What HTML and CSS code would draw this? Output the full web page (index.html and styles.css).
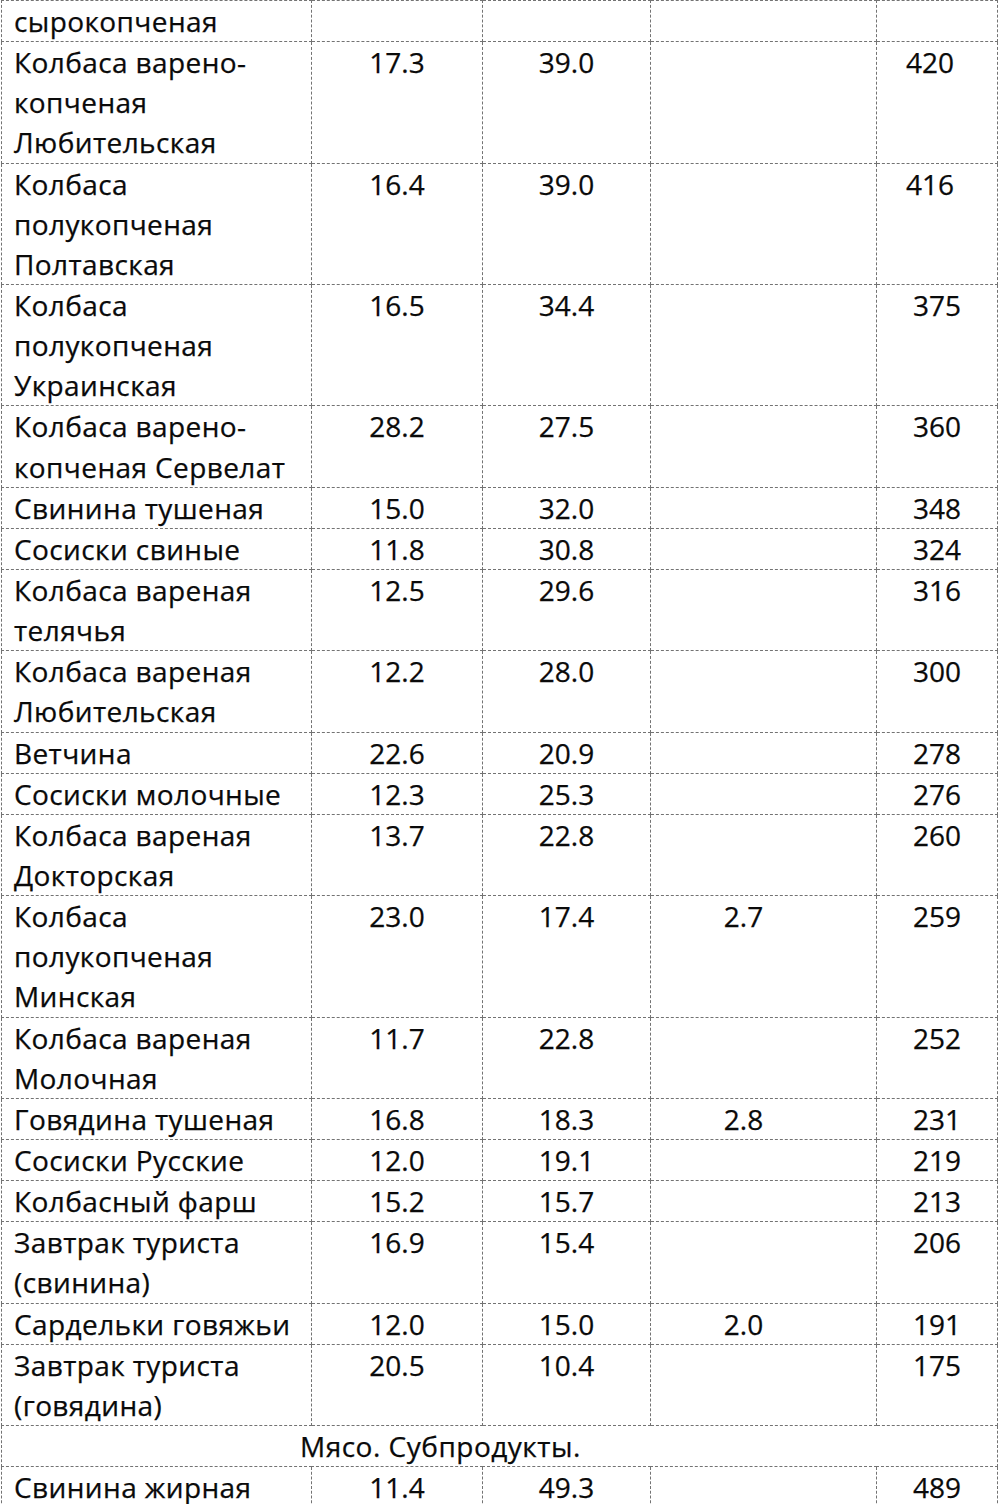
FILE: index.html
```html
<!DOCTYPE html>
<html lang="ru">
<head>
<meta charset="utf-8">
<title>Калорийность мясных продуктов</title>
<link rel="stylesheet" href="styles.css">
</head>
<body>
<table class="food-table">
  <colgroup>
    <col class="c-name"><col class="c-prot"><col class="c-fat"><col class="c-carb"><col class="c-kcal">
  </colgroup>
  <tbody>
    <tr><td class="name">сырокопченая</td><td></td><td></td><td class="carb"></td><td></td></tr>
    <tr><td class="name">Колбаса варено-<br>копченая<br>Любительская</td><td>17.3</td><td>39.0</td><td class="carb"></td><td class="kcal-shift">420</td></tr>
    <tr><td class="name">Колбаса<br>полукопченая<br>Полтавская</td><td>16.4</td><td>39.0</td><td class="carb"></td><td class="kcal-shift">416</td></tr>
    <tr><td class="name">Колбаса<br>полукопченая<br>Украинская</td><td>16.5</td><td>34.4</td><td class="carb"></td><td>375</td></tr>
    <tr><td class="name">Колбаса варено-<br>копченая Сервелат</td><td>28.2</td><td>27.5</td><td class="carb"></td><td>360</td></tr>
    <tr><td class="name">Свинина тушеная</td><td>15.0</td><td>32.0</td><td class="carb"></td><td>348</td></tr>
    <tr><td class="name">Сосиски свиные</td><td>11.8</td><td>30.8</td><td class="carb"></td><td>324</td></tr>
    <tr><td class="name">Колбаса вареная<br>телячья</td><td>12.5</td><td>29.6</td><td class="carb"></td><td>316</td></tr>
    <tr><td class="name">Колбаса вареная<br>Любительская</td><td>12.2</td><td>28.0</td><td class="carb"></td><td>300</td></tr>
    <tr><td class="name">Ветчина</td><td>22.6</td><td>20.9</td><td class="carb"></td><td>278</td></tr>
    <tr><td class="name">Сосиски молочные</td><td>12.3</td><td>25.3</td><td class="carb"></td><td>276</td></tr>
    <tr><td class="name">Колбаса вареная<br>Докторская</td><td>13.7</td><td>22.8</td><td class="carb"></td><td>260</td></tr>
    <tr><td class="name">Колбаса<br>полукопченая<br>Минская</td><td>23.0</td><td>17.4</td><td class="carb">2.7</td><td>259</td></tr>
    <tr><td class="name">Колбаса вареная<br>Молочная</td><td>11.7</td><td>22.8</td><td class="carb"></td><td>252</td></tr>
    <tr><td class="name">Говядина тушеная</td><td>16.8</td><td>18.3</td><td class="carb">2.8</td><td>231</td></tr>
    <tr><td class="name">Сосиски Русские</td><td>12.0</td><td>19.1</td><td class="carb"></td><td>219</td></tr>
    <tr><td class="name">Колбасный фарш</td><td>15.2</td><td>15.7</td><td class="carb"></td><td>213</td></tr>
    <tr><td class="name">Завтрак туриста<br>(свинина)</td><td>16.9</td><td>15.4</td><td class="carb"></td><td>206</td></tr>
    <tr><td class="name">Сардельки говяжьи</td><td>12.0</td><td>15.0</td><td class="carb">2.0</td><td>191</td></tr>
    <tr><td class="name">Завтрак туриста<br>(говядина)</td><td>20.5</td><td>10.4</td><td class="carb"></td><td>175</td></tr>
    <tr><td class="section" colspan="5">Мясо. Субпродукты.</td></tr>
    <tr><td class="name">Свинина жирная</td><td>11.4</td><td>49.3</td><td class="carb"></td><td>489</td></tr>
  </tbody>
</table>
</body>
</html>
```

FILE: styles.css
```css
html, body {
  margin: 0;
  padding: 0;
  background: #ffffff;
}

body {
  padding-left: 1px;
  font-family: "Open Sans", "Noto Sans", sans-serif;
  font-size: 28px;
  color: #0a0a0a;
  -webkit-text-stroke: 0.25px #0a0a0a;
}

.food-table {
  border-collapse: collapse;
  table-layout: fixed;
  width: 996px;
}

.c-name { width: 310px; }
.c-prot { width: 171px; }
.c-fat  { width: 168px; }
.c-carb { width: 226px; }
.c-kcal { width: 121px; }

.food-table td {
  border: 1px dashed #737373;
  padding: 0;
  line-height: 40.14px;
  height: 40.14px;
  vertical-align: top;
  text-align: center;
  white-space: nowrap;
}

.food-table td.name {
  text-align: left;
  padding-left: 12px;
  letter-spacing: 0.4px;
}

.food-table td.carb {
  padding-right: 40px;
}

.food-table td.kcal-shift {
  padding-right: 14px;
}

.food-table td.section {
  text-align: left;
  padding-left: 298px;
  letter-spacing: 0.5px;
}
```
